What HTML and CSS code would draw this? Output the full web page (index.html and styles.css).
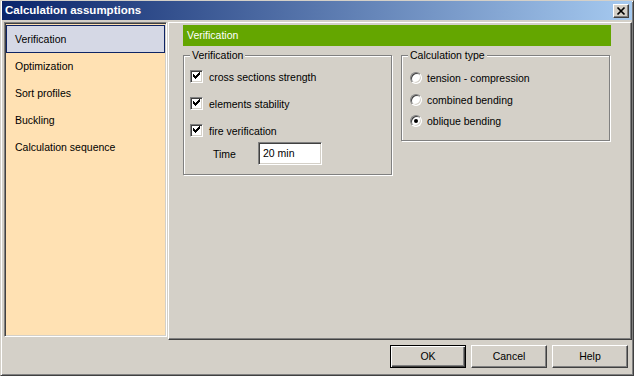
FILE: index.html
```html
<!DOCTYPE html>
<html>
<head lang="en">
    <meta charset="UTF-8">
    <title>Calculation assumptions</title>
    <link rel="stylesheet" href="styles.css">
</head>
<body>
<div class="window">
    <div class="titlebar">
        <span class="title">Calculation assumptions</span>
        <a href="javascript:;" class="close">
            <svg width="14" height="12" viewBox="0 0 14 12">
                <path d="M3.5 2.5 L10.5 9.5 M10.5 2.5 L3.5 9.5" stroke="#000" stroke-width="1.7" fill="none"/>
            </svg>
        </a>
    </div>
    <div class="main">
        <ul class="nav">
            <li class="current">Verification</li>
            <li>Optimization</li>
            <li>Sort profiles</li>
            <li>Buckling</li>
            <li>Calculation sequence</li>
        </ul>
        <div class="content">
            <div class="header">Verification</div>
            <div class="groups">
                <fieldset class="group group-verif">
                    <legend>Verification</legend>
                    <label class="check">
                        <span class="box">
                            <svg width="9" height="9" viewBox="0 0 9 9" shape-rendering="crispEdges">
                                <path d="M1 2h1v3h-1z M2 3h1v3h-1z M3 4h1v3h-1z M4 3h1v3h-1z M5 2h1v3h-1z M6 1h1v3h-1z M7 0h1v3h-1z" fill="#000"/>
                            </svg>
                        </span>
                        cross sections strength
                    </label>
                    <label class="check">
                        <span class="box">
                            <svg width="9" height="9" viewBox="0 0 9 9" shape-rendering="crispEdges">
                                <path d="M1 2h1v3h-1z M2 3h1v3h-1z M3 4h1v3h-1z M4 3h1v3h-1z M5 2h1v3h-1z M6 1h1v3h-1z M7 0h1v3h-1z" fill="#000"/>
                            </svg>
                        </span>
                        elements stability
                    </label>
                    <label class="check">
                        <span class="box">
                            <svg width="9" height="9" viewBox="0 0 9 9" shape-rendering="crispEdges">
                                <path d="M1 2h1v3h-1z M2 3h1v3h-1z M3 4h1v3h-1z M4 3h1v3h-1z M5 2h1v3h-1z M6 1h1v3h-1z M7 0h1v3h-1z" fill="#000"/>
                            </svg>
                        </span>
                        fire verification
                    </label>
                    <div class="time-row">
                        <span class="time-label">Time</span>
                        <span class="edit">20 min</span>
                    </div>
                </fieldset>
                <fieldset class="group group-calc">
                    <legend>Calculation type</legend>
                    <label class="radio"><span class="dot"></span>tension - compression</label>
                    <label class="radio"><span class="dot"></span>combined bending</label>
                    <label class="radio"><span class="dot checked"></span>oblique bending</label>
                </fieldset>
            </div>
        </div>
    </div>
    <div class="buttons">
        <a href="javascript:;" class="btn btn-default">OK</a>
        <a href="javascript:;" class="btn">Cancel</a>
        <a href="javascript:;" class="btn">Help</a>
    </div>
</div>
</body>
</html>
```
FILE: styles.css
```css
/* reset */
body,ul,li,fieldset,legend{margin:0;padding:0}
ul{list-style:none}
a{text-decoration:none;color:#000}
*{box-sizing:border-box}
body{
    background:#d4d0c8;
    font:10.5px "Liberation Sans", Arial, sans-serif;
    color:#000;
}

.window{
    width:634px;
    height:376px;
    padding:0 1px 1px 1px;
    border:1px solid;
    border-color:#d4d0c8 #404040 #404040 #d4d0c8;
    box-shadow:inset 1px 1px 0 #fff, inset -1px -1px 0 #808080;
    display:flex;
    flex-direction:column;
}

/* title bar */
.titlebar{
    height:19px;
    background:linear-gradient(to right, #0a246a, #a6caf0);
    display:flex;
    align-items:flex-start;
    justify-content:space-between;
    padding:0 3px 0 3px;
}
.title{
    color:#fff;
    font-weight:bold;
    font-size:11.5px;
    line-height:19px;
}
.close{
    width:16px;
    height:14px;
    margin-top:3px;
    background:#d4d0c8;
    border:1px solid;
    border-color:#fff #404040 #404040 #fff;
    box-shadow:inset -1px -1px 0 #808080;
    display:flex;
    align-items:center;
    justify-content:center;
}

.main{
    display:flex;
    margin-top:2px;
    height:318px;
}

/* left list */
.nav{
    width:163px;
    height:315px;
    margin-left:2px;
    background:#ffe1b3;
    border:1px solid;
    border-color:#808080 #fff #fff #808080;
    box-shadow:inset 1px 1px 0 #404040, inset -1px -1px 0 #d4d0c8;
    padding:2px 1px;
}
.nav li{
    height:27px;
    line-height:27px;
    padding-left:9px;
}
.nav li.current{
    height:28px;
    background:#d5d8e5;
    border:1px solid #0e2464;
    line-height:26px;
    padding-left:8px;
}

/* right side */
.content{
    width:464px;
    margin-left:1px;
    border:1px solid;
    border-color:#fff #404040 #404040 #fff;
    box-shadow:inset -1px -1px 0 #808080;
    padding:2px 0 0 14px;
}
.header{
    width:428px;
    height:21px;
    line-height:21px;
    background:#64a600;
    color:#fff;
    padding-left:4px;
}
.groups{
    display:flex;
    align-items:flex-start;
    margin-top:3px;
}
.group{
    width:209px;
    border:1px solid #808080;
    box-shadow:inset 1px 1px 0 #fff, 1px 1px 0 #fff;
    min-width:0;
}
.group legend{
    margin-left:0;
    padding:0 2px;
    background:#d4d0c8;
    line-height:13px;
}
.group-verif{
    padding:8px 0 9px 6px;
}
.group-calc{
    margin-left:9px;
    padding:10px 0 13px 8px;
}
.group-calc legend{
    margin-left:-2px;
}

.check{
    display:flex;
    align-items:center;
    height:13px;
    margin-bottom:14px;
}
.box{
    width:13px;
    height:13px;
    margin-right:6px;
    background:#fff;
    border:1px solid;
    border-color:#808080 #fff #fff #808080;
    box-shadow:inset 1px 1px 0 #404040, inset -1px -1px 0 #d4d0c8;
    display:flex;
    align-items:center;
    justify-content:center;
}
.time-row{
    display:flex;
    align-items:center;
    margin-top:-9px;
}
.time-label{
    width:45px;
    padding-left:23px;
    box-sizing:content-box;
}
.edit{
    width:64px;
    height:23px;
    line-height:21px;
    background:#fff;
    border:1px solid;
    border-color:#808080 #fff #fff #808080;
    box-shadow:inset 1px 1px 0 #404040, inset -1px -1px 0 #d4d0c8;
    padding-left:4px;
}

.radio{
    display:flex;
    align-items:center;
    height:12px;
    margin-bottom:9.5px;
}
.radio:last-child{
    margin-bottom:0;
}
.dot{
    width:12px;
    height:12px;
    margin-right:5px;
    border-radius:50%;
    background:#fff;
    border:1px solid;
    border-color:#808080 #fff #fff #808080;
    box-shadow:inset 1px 1px 0 #404040, inset -1px -1px 0 #d4d0c8;
    position:relative;
}
.dot.checked:after{
    content:"";
    position:absolute;
    left:3px;
    top:3px;
    width:4px;
    height:4px;
    border-radius:50%;
    background:#000;
}

/* bottom buttons */
.buttons{
    display:flex;
    justify-content:flex-end;
    gap:5px;
    margin-top:5px;
    padding-right:4px;
}
.btn{
    width:76px;
    height:23px;
    line-height:21px;
    text-align:center;
    background:#d4d0c8;
    border:1px solid;
    border-color:#fff #404040 #404040 #fff;
    box-shadow:inset -1px -1px 0 #808080;
}
.btn-default{
    border-color:#000;
    box-shadow:inset 1px 1px 0 #fff, inset -1px -1px 0 #404040, inset -2px -2px 0 #808080;
}
```
